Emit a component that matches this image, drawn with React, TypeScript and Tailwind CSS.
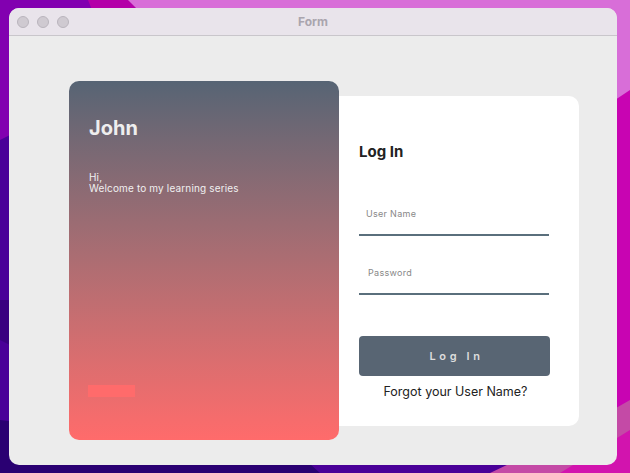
import React from "react";

function Wallpaper() {
  return (
    <svg className="absolute inset-0" width={630} height={473} viewBox="0 0 630 473">
      <rect x={0} y={0} width={630} height={473} fill="#4a0098" />
      <polygon points="0,0 95,0 40,120 0,140" fill="#8200b0" />
      <polygon points="88,0 130,0 138,10 92,10" fill="#b400a8" />
      <polygon points="128,0 630,0 630,110 600,140 140,12" fill="#d86ed8" />
      <polygon points="600,110 630,90 630,473 590,473" fill="#c804b2" />
      <polygon points="0,330 0,473 320,473 300,455 0,420" fill="#2a0072" />
      <polygon points="0,300 0,340 10,345 10,300" fill="#3a0080" />
      <polygon points="490,473 630,473 630,400 560,440" fill="#c44aa6" />
      <polygon points="560,473 630,473 630,430" fill="#d214ae" />
    </svg>
  );
}

export default function App() {
  return (
    <div
      className="relative w-[630px] h-[473px] overflow-hidden"
      style={{ fontFamily: "Inter, 'Noto Sans', sans-serif" }}
    >
      <Wallpaper />
      <div className="absolute left-[9px] top-[8px] w-[608px] h-[457px] rounded-[10px] overflow-hidden bg-[#ececec] flex flex-col">
        <div className="relative h-[28px] bg-[#e9e4eb] border-b border-[#c9c6cb] flex items-center pl-[8px] gap-[8px] shrink-0">
          <div className="w-[12px] h-[12px] rounded-full bg-[#cfcad1] border border-[#b9b4bc]" />
          <div className="w-[12px] h-[12px] rounded-full bg-[#cfcad1] border border-[#b9b4bc]" />
          <div className="w-[12px] h-[12px] rounded-full bg-[#cfcad1] border border-[#b9b4bc]" />
          <div className="absolute inset-0 flex items-center justify-center text-[12px] font-bold text-[#aaa5ae]">
            Form
          </div>
        </div>
        <div className="flex-1 flex items-start pl-[60px] pt-[45px]">
          <div className="w-[270px] h-[359px] rounded-[10px] bg-gradient-to-b from-[#566474] to-[#ff6b6b] flex flex-col px-[20px] pt-[35px] pb-[43px] relative z-10">
            <div className="text-[20px] leading-[24px] font-bold text-[#eeeeee]">John</div>
            <div className="mt-[32px] text-[10px] text-[#f0f0f0] tracking-[0.15px]">
              <div className="leading-[11px]">Hi,</div>
              <div className="leading-[11px]">Welcome to my learning series</div>
            </div>
            <div className="mt-auto -ml-[1px] w-[47px] h-[12px] bg-[#ff6b6b]" />
          </div>
          <div className="mt-[15px] w-[240px] h-[330px] bg-white rounded-r-[10px] flex flex-col px-[20px] pt-[47px]">
            <div className="text-[15px] leading-[18px] font-bold text-[#222]">Log In</div>
            <div className="mt-[47px] w-[190px] border-b-2 border-[#5a6f7c] pl-[7px] pb-[15px] text-[9px] leading-[11px] text-[#888] tracking-[0.3px]">
              User Name
            </div>
            <div className="mt-[31px] w-[190px] border-b-2 border-[#5a6f7c] pl-[9px] pb-[15px] text-[9px] leading-[11px] text-[#888] tracking-[0.3px]">
              Password
            </div>
            <div className="mt-[41px] w-[191px] h-[40px] rounded-[4px] bg-[#586573] flex items-center justify-center text-[11px] font-semibold text-[#dddddd] tracking-[3.6px] pl-[4px]">
              Log In
            </div>
            <div className="mt-[8px] w-[191px] pl-[2px] text-center text-[12.5px] leading-[16px] text-[#222]">
              Forgot your User Name?
            </div>
          </div>
        </div>
      </div>
    </div>
  );
}
